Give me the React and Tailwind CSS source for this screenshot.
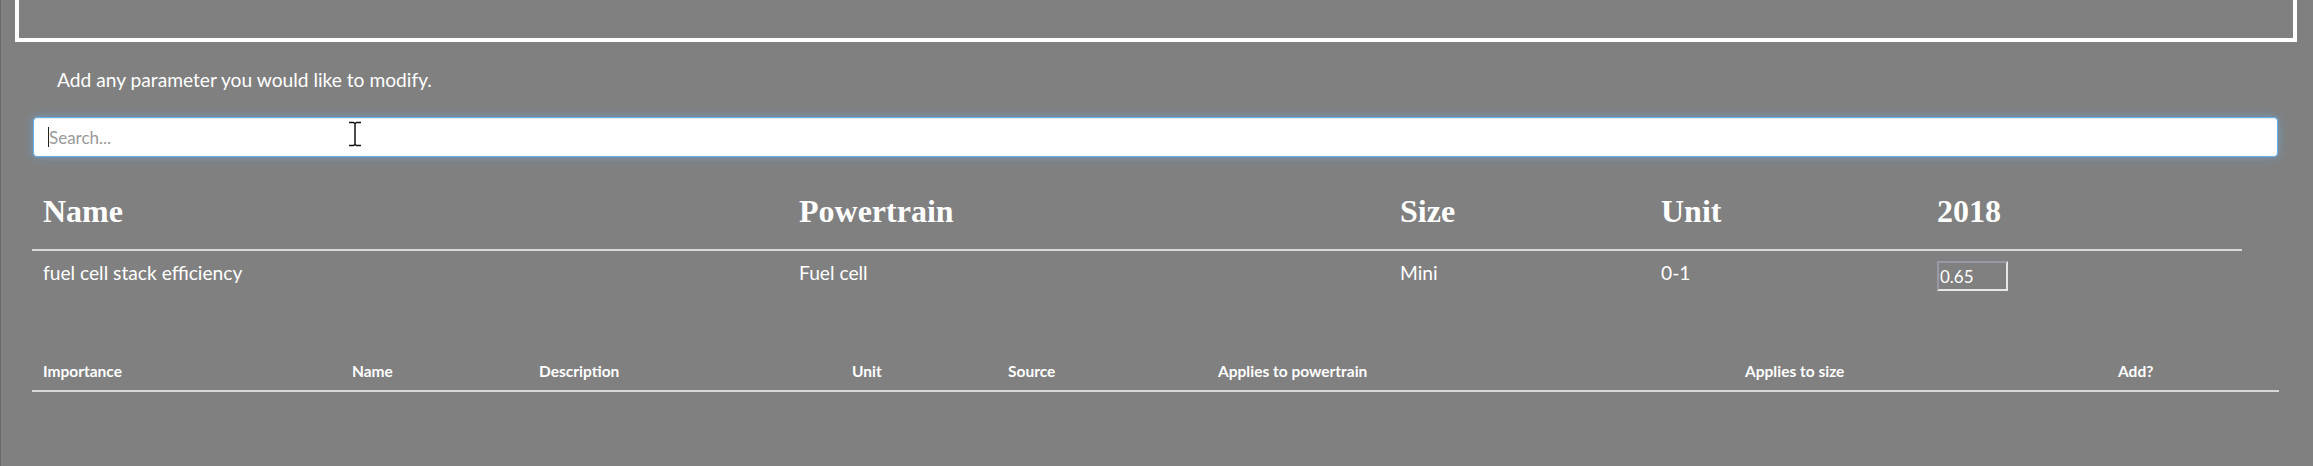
import React from "react";

const topCols = [
  { label: "Name", value: "fuel cell stack efficiency" },
  { label: "Powertrain", value: "Fuel cell" },
  { label: "Size", value: "Mini" },
  { label: "Unit", value: "0-1" },
];

const bottomCols = [
  "Importance",
  "Name",
  "Description",
  "Unit",
  "Source",
  "Applies to powertrain",
  "Applies to size",
  "Add?",
];

export default function App() {
  return (
    <div className="min-h-[466px] w-full overflow-hidden border-l border-[#6a6a6a] bg-[#808080] font-['Lato','Noto_Sans',sans-serif] text-white">
      {/* top box (cut off) */}
      <div className="ml-[14px] h-[42px] w-[2282px] border-x-4 border-b-4 border-white" />

      <p className="ml-[56px] mt-[26px] text-[19.2px] leading-[24px] text-white">
        Add any parameter you would like to modify.
      </p>

      {/* search */}
      <div className="relative ml-[32px] mt-[25px] w-[2245px]">
        <input
          type="text"
          placeholder="Search..."
          readOnly
          className="block h-[40px] w-full rounded-[4px] border border-[#66afe9] bg-white pl-[15px] text-[17px] text-[#555] shadow-[inset_0_1px_1px_rgba(0,0,0,0.075),0_0_8px_rgba(102,175,233,0.6)] outline-none placeholder:text-[#999]"
        />
        <span className="pointer-events-none absolute left-[15px] top-[10px] h-[20px] w-px bg-[#222]" />
        {/* mouse I-beam cursor */}
        <svg
          className="pointer-events-none absolute left-[314px] top-[4px]"
          width="16"
          height="26"
          viewBox="0 0 16 26"
        >
          <path
            d="M2 1.5h4.5l1.5 1 1.5-1H14M8 2.5v21M2 24.5h4.5l1.5-1 1.5 1H14"
            fill="none"
            stroke="#fff"
            strokeWidth="3"
          />
          <path
            d="M2 1.5h4.5l1.5 1 1.5-1H14M8 2.5v21M2 24.5h4.5l1.5-1 1.5 1H14"
            fill="none"
            stroke="#111"
            strokeWidth="1.5"
          />
        </svg>
      </div>

      {/* parameter table */}
      <div className="ml-[31px] mt-[10px] w-[2210px]">
        <div className="grid grid-cols-[756px_601px_261px_276px_316px] border-b-2 border-[#d8d8d8]">
          {[...topCols.map((c) => c.label), "2018"].map((h) => (
            <div
              key={h}
              className="pb-[18px] pl-[11px] pt-[24px] font-['Liberation_Serif','Times_New_Roman',serif] text-[32px] font-bold leading-[40px]"
            >
              {h}
            </div>
          ))}
        </div>
        <div className="grid h-[50px] grid-cols-[756px_601px_261px_276px_316px] items-start">
          {topCols.map((c) => (
            <div key={c.label} className="pl-[11px] pt-[10px] text-[19.2px] leading-[24px]">
              {c.value}
            </div>
          ))}
          <div className="pl-[11px] pt-[10px]">
            <input
              type="text"
              defaultValue="0.65"
              className="block h-[30px] w-[71px] border-2 border-b-[#e6e6e6] border-l-[#9a98a6] border-r-[#e6e6e6] border-t-[#9a98a6] bg-transparent px-[1px] text-[17px] text-white outline-none"
            />
          </div>
        </div>
      </div>

      {/* available parameters table */}
      <div className="ml-[31px] mt-[60px] w-[2247px]">
        <div className="grid grid-cols-[309px_187px_313px_156px_210px_527px_373px_172px] border-b-2 border-[#d8d8d8]">
          {bottomCols.map((h) => (
            <div key={h} className="pb-[9px] pl-[11px] text-[15.5px] font-bold leading-[20px]">
              {h}
            </div>
          ))}
        </div>
      </div>
    </div>
  );
}
